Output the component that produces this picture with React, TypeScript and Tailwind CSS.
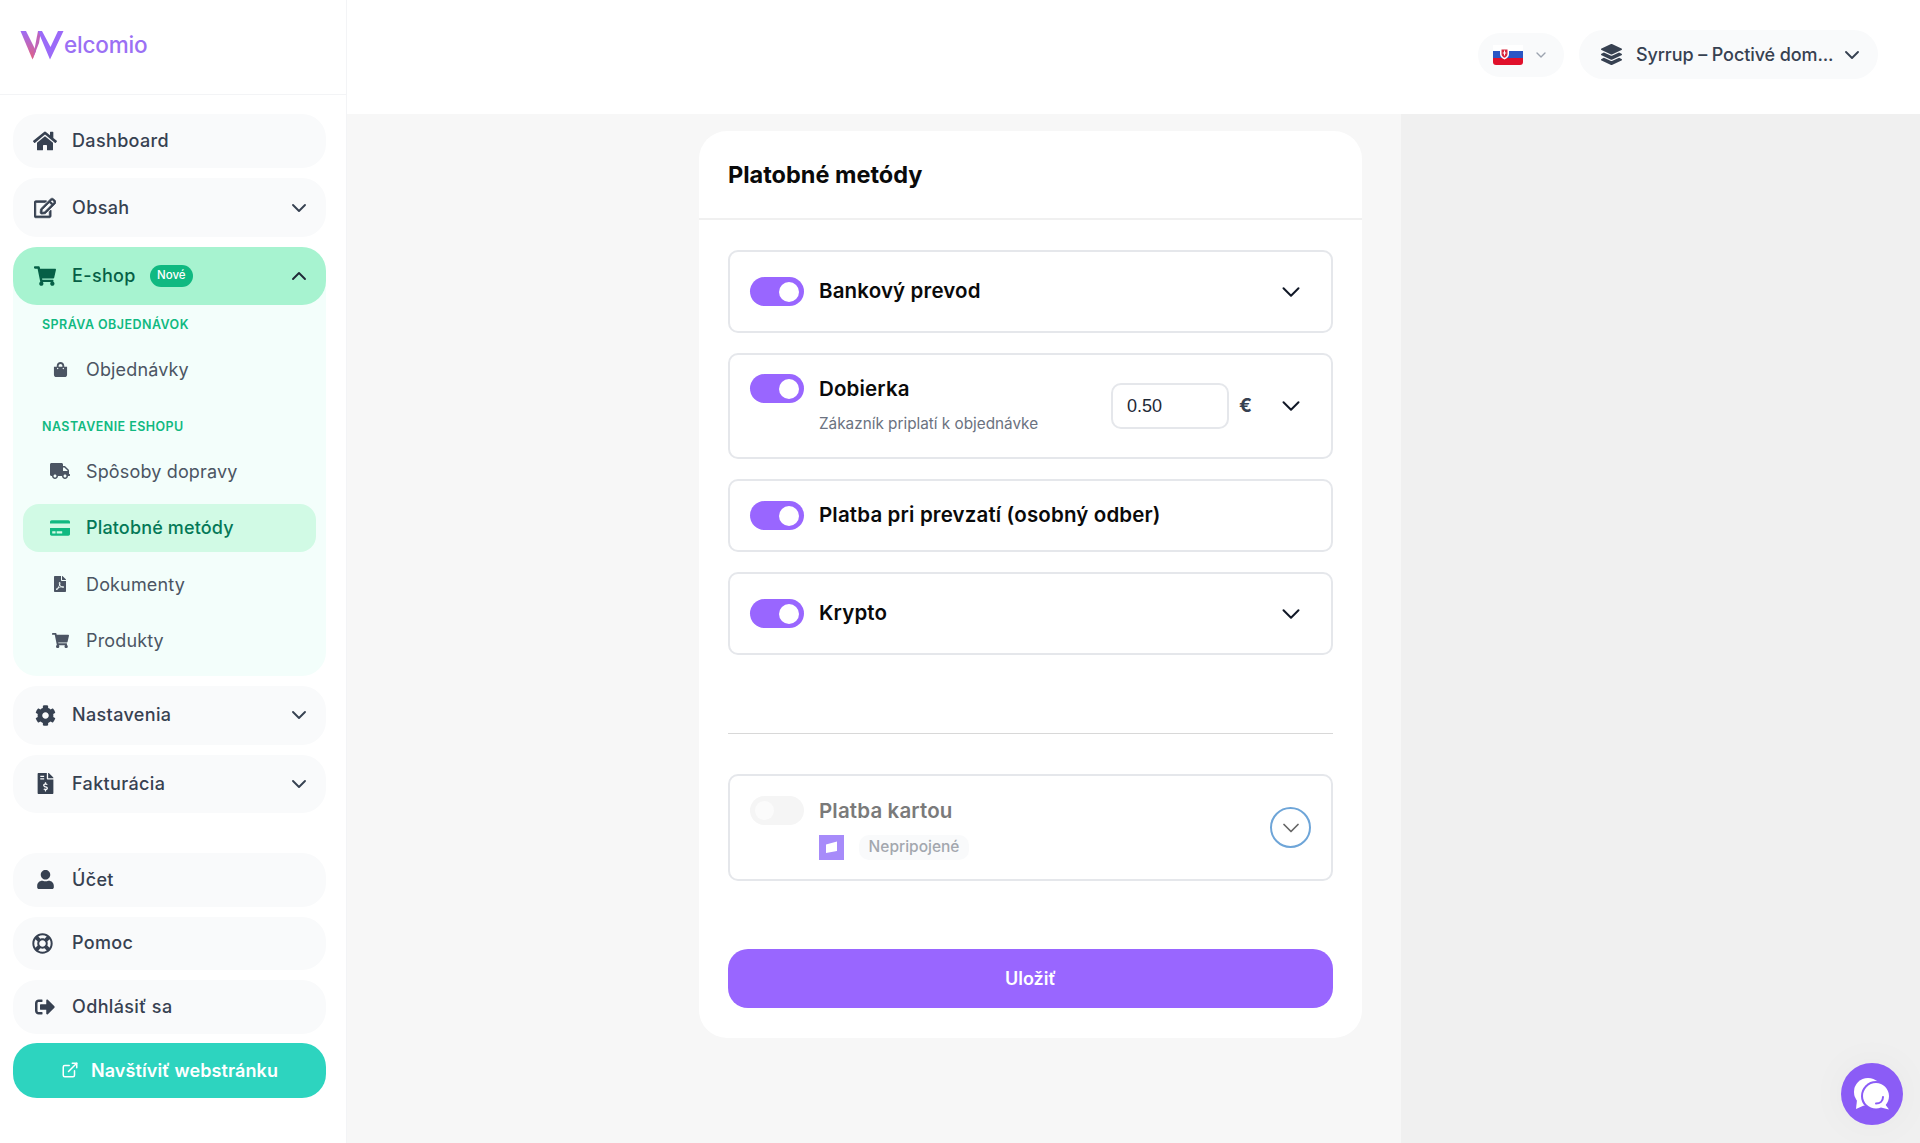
import type { ReactNode } from "react";
import {
  FaHome,
  FaShoppingCart,
  FaShoppingBag,
  FaTruck,
  FaCreditCard,
  FaFilePdf,
  FaCog,
  FaFileInvoiceDollar,
  FaUser,
  FaRegLifeRing,
  FaSignOutAlt,
  FaLayerGroup,
  FaRegEdit,
} from "react-icons/fa";
import { ChevronDown, ChevronUp, ExternalLink } from "lucide-react";

const Logo = () => (
  <div className="flex items-end">
    <svg width="45" height="30" viewBox="0 0 45 30">
      <defs>
        <linearGradient id="logoPink" x1="0" y1="0" x2="0" y2="1">
          <stop offset="0" stopColor="#9d6cf6" />
          <stop offset="1" stopColor="#e5607a" />
        </linearGradient>
      </defs>
      <polygon points="0.5,1 6,1 16,21 12.5,29.5" fill="url(#logoPink)" />
      <polygon points="12.5,29.5 18,1 21,1 19,13" fill="#c063b8" />
      <polygon points="18,1 22,1 30.5,17 38,1 43.5,1 30,29.5" fill="#9b6af8" />
    </svg>
    <span className="-ml-[1px] mb-[1px] text-[22.500px] leading-[28px] font-medium tracking-[-0.2px] text-[#9b70f4]">elcomio</span>
  </div>
);

const NavItem = ({
  icon,
  label,
  height,
  chevron,
}: {
  icon: ReactNode;
  label: string;
  height: string;
  chevron?: boolean;
}) => (
  <div className={`flex items-center rounded-[24px] bg-[#f9fafb] pl-[20px] pr-[15px] text-[#374151] ${height}`}>
    <span className="flex w-[24px] justify-center">{icon}</span>
    <span className="ml-[15px] text-[18px] leading-none font-[450] tracking-[0.35px]">{label}</span>
    {chevron && <ChevronDown className="ml-auto" size={24} strokeWidth={1.9} />}
  </div>
);

const SubItem = ({
  icon,
  label,
  active,
}: {
  icon: ReactNode;
  label: string;
  active?: boolean;
}) => (
  <div
    className={`mx-[10px] flex h-[48px] items-center rounded-[16px] pl-[27px] text-[18px] ${
      active ? "bg-[#d1fae5] font-medium text-[#047857]" : "text-[#4b5563]"
    }`}
  >
    <span className="flex w-[20px] justify-center">{icon}</span>
    <span className="ml-[16px] pt-[1px] leading-none tracking-[0.15px]">{label}</span>
  </div>
);

const Toggle = ({ on = true }: { on?: boolean }) =>
  on ? (
    <div className="flex h-[29px] w-[54px] shrink-0 items-center justify-end rounded-full bg-[#9966ff] pr-[5px]">
      <div className="h-[20px] w-[20px] rounded-full bg-white" />
    </div>
  ) : (
    <div className="flex h-[29px] w-[54px] shrink-0 items-center rounded-full bg-[#f5f5f5] pl-[5px]">
      <div className="h-[19px] w-[19px] rounded-full bg-[#fbfbfb]" />
    </div>
  );

const RowChevron = () => (
  <div className="flex h-[41px] w-[41px] items-center justify-center text-[#111827]">
    <ChevronDown size={30} strokeWidth={1.6} />
  </div>
);

const Row = ({ title, height, chevron = true }: { title: string; height: string; chevron?: boolean }) => (
  <div className={`flex items-center justify-between rounded-[10px] border-2 border-[#e5e7eb] pl-[20px] pr-[20px] ${height}`}>
    <div className="flex items-center gap-[15px]">
      <Toggle />
      <span className="text-[20.500px] font-semibold tracking-[0.15px] text-[#0a0a0a]">{title}</span>
    </div>
    {chevron && <RowChevron />}
  </div>
);

const App = () => {
  return (
    <div className="flex h-[1143px] w-[1920px] overflow-hidden bg-white font-['Inter',sans-serif]">
      {/* Sidebar */}
      <aside className="w-[347px] shrink-0 border-r border-[#f3f4f6] bg-white">
        <div className="flex h-[95px] items-start border-b border-[#f3f4f6] pl-[20px] pt-[30px]">
          <Logo />
        </div>
        <nav className="flex flex-col pl-[13px] pr-[20px] pt-[19px]">
          <NavItem height="h-[54px]" icon={<FaHome size={24} />} label="Dashboard" />
          <div className="mt-[10px]">
            <NavItem
              height="h-[59px]"
              icon={<FaRegEdit size={22} stroke="currentColor" strokeWidth={18} />}
              label="Obsah"
              chevron
            />
          </div>
          <div className="mt-[10px] rounded-[24px] bg-[#f3fefb] pb-[11px]">
            <div className="flex h-[58px] items-center rounded-[24px] bg-[#a7f3d0] pl-[20px] pr-[15px] text-[#065f46]">
              <span className="flex w-[24px] justify-center">
                <FaShoppingCart size={22} />
              </span>
              <span className="ml-[15px] text-[18px] leading-none font-[450] tracking-[0.35px]">E-shop</span>
              <span className="ml-[14px] flex h-[22px] w-[43px] items-center justify-center rounded-full bg-[#10b981] text-[11.500px] font-medium text-white">
                Nové
              </span>
              <ChevronUp className="ml-auto text-[#1f2937]" size={24} strokeWidth={1.9} />
            </div>
            <div className="flex h-[40px] items-center pl-[29px] text-[12.500px] font-semibold tracking-[0.45px] text-[#10b981]">
              SPRÁVA OBJEDNÁVOK
            </div>
            <SubItem icon={<FaShoppingBag size={15} />} label="Objednávky" />
            <div className="mt-[14px] flex h-[40px] items-center pl-[29px] text-[12.500px] font-semibold tracking-[0.45px] text-[#10b981]">
              NASTAVENIE ESHOPU
            </div>
            <div className="flex flex-col gap-[8.500px]">
              <SubItem icon={<FaTruck size={20} />} label="Spôsoby dopravy" />
              <SubItem active icon={<FaCreditCard className="text-[#10b981]" size={20} />} label="Platobné metódy" />
              <SubItem icon={<FaFilePdf size={16} />} label="Dokumenty" />
              <SubItem icon={<FaShoppingCart size={17} />} label="Produkty" />
            </div>
          </div>
          <div className="mt-[10px]">
            <NavItem height="h-[59px]" icon={<FaCog size={21} />} label="Nastavenia" chevron />
          </div>
          <div className="mt-[10px]">
            <NavItem height="h-[58px]" icon={<FaFileInvoiceDollar size={21} />} label="Fakturácia" chevron />
          </div>
          <div className="mt-[40px]">
            <NavItem height="h-[54px]" icon={<FaUser size={19} />} label="Účet" />
          </div>
          <div className="mt-[10px]">
            <NavItem height="h-[53px]" icon={<FaRegLifeRing className="-ml-[5px]" size={21} />} label="Pomoc" />
          </div>
          <div className="mt-[10px]">
            <NavItem height="h-[54px]" icon={<FaSignOutAlt size={20} />} label="Odhlásiť sa" />
          </div>
          <div className="mt-[9px] flex h-[55px] items-center justify-center gap-[12px] rounded-[24px] bg-[#2dd4bf] text-[18px] font-semibold tracking-[0.1px] text-white">
            <ExternalLink size={18} strokeWidth={2} />
            Navštíviť webstránku
          </div>
        </nav>
      </aside>

      {/* Main */}
      <div className="flex min-w-0 flex-1 flex-col">
        <header className="flex h-[114px] shrink-0 items-center justify-end gap-[15px] bg-white pb-[5px] pr-[42px]">
          <div className="flex h-[44px] w-[86px] items-center rounded-full bg-[#f9fafb] pl-[15px]">
            <svg width="30" height="20" viewBox="0 0 30 20">
              <rect width="30" height="6" y="0" fill="#ffffff" />
              <rect width="30" height="7" y="6" fill="#2b56c4" />
              <path d="M0 13H30V17a3 3 0 0 1-3 3H3a3 3 0 0 1-3-3Z" fill="#e0102b" />
              <path d="M7 3h9v6c0 3-2.500 4.500-4.500 5.500C9.500 13.500 7 12 7 9Z" fill="#ffffff" />
              <path d="M8.500 4.500h6V9c0 2-1.500 3-3 3.800-1.500-.8-3-1.800-3-3.800Z" fill="#d8263c" />
              <path d="M11 5.500h1v2h1.200v1H12v2h-1v-2H9.800v-1H11Z" fill="#ffffff" />
            </svg>
            <ChevronDown className="ml-[10px] text-[#9ca3af]" size={16} strokeWidth={2} />
          </div>
          <div className="flex h-[49px] w-[299px] items-center rounded-full bg-[#f9fafb] pl-[22px] text-[#374151]">
            <FaLayerGroup size={21} />
            <span className="ml-[14px] text-[18px] font-[450] tracking-[-0.1px]">Syrrup – Poctivé dom...</span>
            <ChevronDown className="ml-[7px]" size={24} strokeWidth={1.9} />
          </div>
        </header>

        <div className="flex min-h-0 flex-1">
          <main className="w-[1054px] bg-[#f7f7f7] pl-[352px] pt-[17px]">
            <div className="w-[663px] rounded-[28px] bg-white">
              <div className="flex h-[89px] items-center border-b-2 border-[#f0f0f0] pl-[29px]">
                <h1 className="text-[23.500px] font-bold text-[#0a0a0a]">Platobné metódy</h1>
              </div>
              <div className="px-[29px] pb-[30px] pt-[30px]">
                <div className="flex flex-col gap-[20px]">
                  <Row height="h-[83px]" title="Bankový prevod" />
                  <div className="flex h-[106px] items-center rounded-[10px] border-2 border-[#e5e7eb] pl-[20px] pr-[20px]">
                    <div className="flex items-start gap-[15px]">
                      <Toggle />
                      <div>
                        <div className="text-[20.500px] leading-[29px] font-semibold tracking-[0.15px] text-[#0a0a0a]">Dobierka</div>
                        <div className="mt-[6px] text-[15.300px] leading-[29px] text-[#6b7280]">Zákazník priplatí k objednávke</div>
                      </div>
                    </div>
                    <input
                      className="ml-auto h-[46px] w-[118px] rounded-[10px] border-2 border-[#e5e7eb] pl-[14px] font-['Liberation_Sans',sans-serif] text-[18px] text-[#1f2937] outline-none"
                      defaultValue="0.50"
                    />
                    <span className="ml-[10px] text-[19px] font-bold text-[#374151]">€</span>
                    <div className="ml-[18px]">
                      <RowChevron />
                    </div>
                  </div>
                  <Row height="h-[73px]" title="Platba pri prevzatí (osobný odber)" chevron={false} />
                  <Row height="h-[83px]" title="Krypto" />
                </div>

                <div className="mt-[78px] h-[1px] bg-[#d8d8d8]" />

                <div className="mt-[40px] flex h-[107px] items-center justify-between rounded-[10px] border-2 border-[#e5e7eb] pl-[20px] pr-[20px]">
                  <div className="flex items-start gap-[15px]">
                    <Toggle on={false} />
                    <div>
                      <div className="text-[20.500px] leading-[29px] font-semibold tracking-[0.15px] text-[#7a7a7a]">Platba kartou</div>
                      <div className="mt-[10px] flex items-center gap-[15px]">
                        <svg width="25" height="25" viewBox="0 0 25 25">
                          <rect width="25" height="25" fill="#a78bfa" />
                          <path d="M7 9.500L18 6.500V16L7 18Z" fill="#ffffff" />
                        </svg>
                        <span className="flex h-[25px] w-[110px] items-center justify-center rounded-[10px] bg-[#f9fafb] text-[15.500px] font-medium text-[#a3a7ae]">
                          Nepripojené
                        </span>
                      </div>
                    </div>
                  </div>
                  <div className="flex h-[41px] w-[41px] items-center justify-center rounded-full border-2 border-[#6ea5d8] text-[#666666]">
                    <ChevronDown size={28} strokeWidth={1.5} />
                  </div>
                </div>

                <button className="mt-[68px] flex h-[59px] w-full items-center justify-center rounded-[20px] bg-[#9966ff] text-[18px] font-semibold text-white">
                  Uložiť
                </button>
              </div>
            </div>
          </main>
          <div className="flex-1 bg-[#f0f0f0]" />
        </div>
      </div>

      {/* Chat widget */}
      <div className="absolute left-[1841px] top-[1063px] flex h-[62px] w-[62px] items-center justify-center rounded-full bg-[#8b5cf6] shadow-[0_0_40px_rgba(0,0,0,0.04)]">
        <svg width="40" height="36" viewBox="0 0 40 36">
          <circle cx="16" cy="16" r="14" fill="#ffffff" />
          <path d="M5 24 L4 33 L13 29Z" fill="#ffffff" />
          <circle cx="24" cy="20" r="15" fill="#8b5cf6" />
          <path d="M24 7c7 0 13 5.800 13 13 0 3.500-1.200 6.500-3.300 9l3.300 4.500-8-1.900c-1.700.6-3.300.9-5 .9-7.200 0-13-5.800-13-12.500S16.800 7 24 7Z" fill="#ffffff" />
          <path d="M31 21c0 4-3 6.500-7 6.500" fill="none" stroke="#8b5cf6" strokeWidth="2" strokeLinecap="round" />
        </svg>
      </div>
    </div>
  );
};

export default App;
